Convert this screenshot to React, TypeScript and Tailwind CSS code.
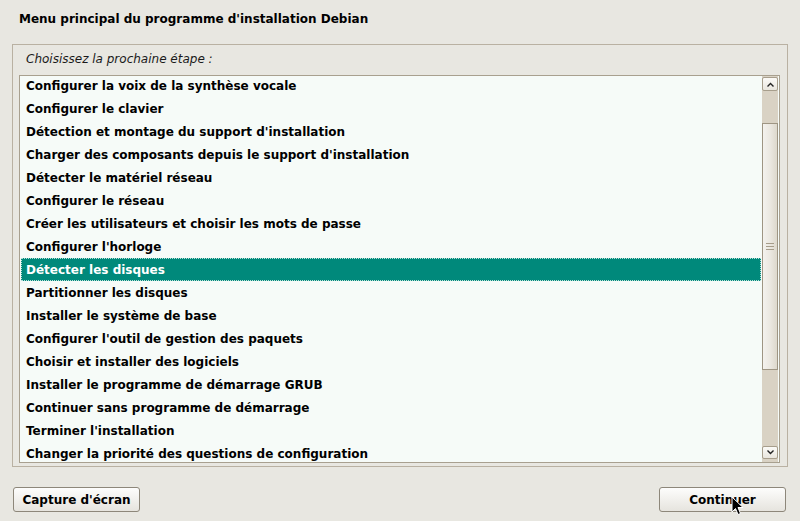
import React from "react";

const items = [
  "Configurer la voix de la synthèse vocale",
  "Configurer le clavier",
  "Détection et montage du support d'installation",
  "Charger des composants depuis le support d'installation",
  "Détecter le matériel réseau",
  "Configurer le réseau",
  "Créer les utilisateurs et choisir les mots de passe",
  "Configurer l'horloge",
  "Détecter les disques",
  "Partitionner les disques",
  "Installer le système de base",
  "Configurer l'outil de gestion des paquets",
  "Choisir et installer des logiciels",
  "Installer le programme de démarrage GRUB",
  "Continuer sans programme de démarrage",
  "Terminer l'installation",
  "Changer la priorité des questions de configuration",
];

export default function App() {
  return (
    <div
      className="relative w-[800px] h-[521px] overflow-hidden bg-[#e8e7e1] text-[12px] text-black"
      style={{ fontFamily: '"DejaVu Sans", sans-serif' }}
    >
      <div className="pl-[19px] pt-[11px] h-[44px] font-bold leading-[16px]">
        Menu principal du programme d'installation Debian
      </div>
      <div className="ml-[12px] w-[776px] h-[423px] border border-[#b9b1a2] flex flex-col">
        <div className="pl-[13px] pt-[6px] h-[30px] italic leading-[16px] text-[#1a1a1a]">
          Choisissez la prochaine étape :
        </div>
        <div className="ml-[6px] w-[761px] h-[388px] border border-[#a8a08f] bg-[#f6fbf8] flex overflow-hidden">
          <div className="flex-1 flex flex-col pl-[1px] -mt-[2px] overflow-hidden">
            {items.map((t, i) => (
              <div
                key={i}
                className={
                  i === 8
                    ? "shrink-0 h-[23px] mr-[1px] pl-[4px] flex items-center font-bold text-white bg-[#00897b] border border-dotted border-[#b9e0d9]"
                    : "shrink-0 h-[23px] pl-[5px] flex items-center font-bold"
                }
              >
                {t}
              </div>
            ))}
          </div>
          <div className="w-[16px] mr-[1px] bg-[#d9d2c4] flex flex-col items-stretch">
            <div className="mt-[1px] h-[14px] rounded-[2px] border border-[#a79e8c] bg-gradient-to-b from-[#fbfaf7] to-[#e9e6de] flex items-center justify-center">
              <svg width="7" height="5" viewBox="0 0 7 5">
                <path d="M0.5 4.5 L3.5 1.5 L6.5 4.5" stroke="#222" strokeWidth="1.4" fill="none" />
              </svg>
            </div>
            <div className="h-[32px]" />
            <div className="h-[247px] border border-[#9e9583] bg-gradient-to-r from-[#f4f2ee] via-[#ebe8e1] to-[#ddd8cc] flex flex-col items-center justify-center gap-[2px]">
              <div className="w-[8px] h-[1px] bg-[#a69c8a]" />
              <div className="w-[8px] h-[1px] bg-[#a69c8a]" />
              <div className="w-[8px] h-[1px] bg-[#a69c8a]" />
            </div>
            <div className="flex-1" />
            <div className="mb-[3px] h-[13px] rounded-[2px] border border-[#a79e8c] bg-gradient-to-b from-[#fbfaf7] to-[#e9e6de] flex items-center justify-center">
              <svg width="7" height="5" viewBox="0 0 7 5">
                <path d="M0.5 0.5 L3.5 3.5 L6.5 0.5" stroke="#222" strokeWidth="1.4" fill="none" />
              </svg>
            </div>
          </div>
        </div>
      </div>
      <div className="flex justify-between pl-[13px] pr-[14px] pt-[20px]">
        <button className="w-[127px] h-[25px] rounded-[3px] border border-[#8d877a] bg-gradient-to-b from-[#fdfdfc] to-[#e6e4de] font-bold text-[12px] leading-none">
          Capture d'écran
        </button>
        <button className="w-[127px] h-[25px] rounded-[3px] border border-[#8d877a] bg-gradient-to-b from-[#fdfdfc] to-[#e6e4de] font-bold text-[12px] leading-none">
          Continuer
        </button>
      </div>
      <svg
        className="absolute left-[731px] top-[496px]"
        width="13"
        height="20"
        viewBox="0 0 13 20"
      >
        <path
          d="M1 1 L1 16 L4.5 12.5 L7 18.5 L9.5 17.5 L7 11.5 L12 11.5 Z"
          fill="#000"
          stroke="#fff"
          strokeWidth="1"
        />
      </svg>
    </div>
  );
}
